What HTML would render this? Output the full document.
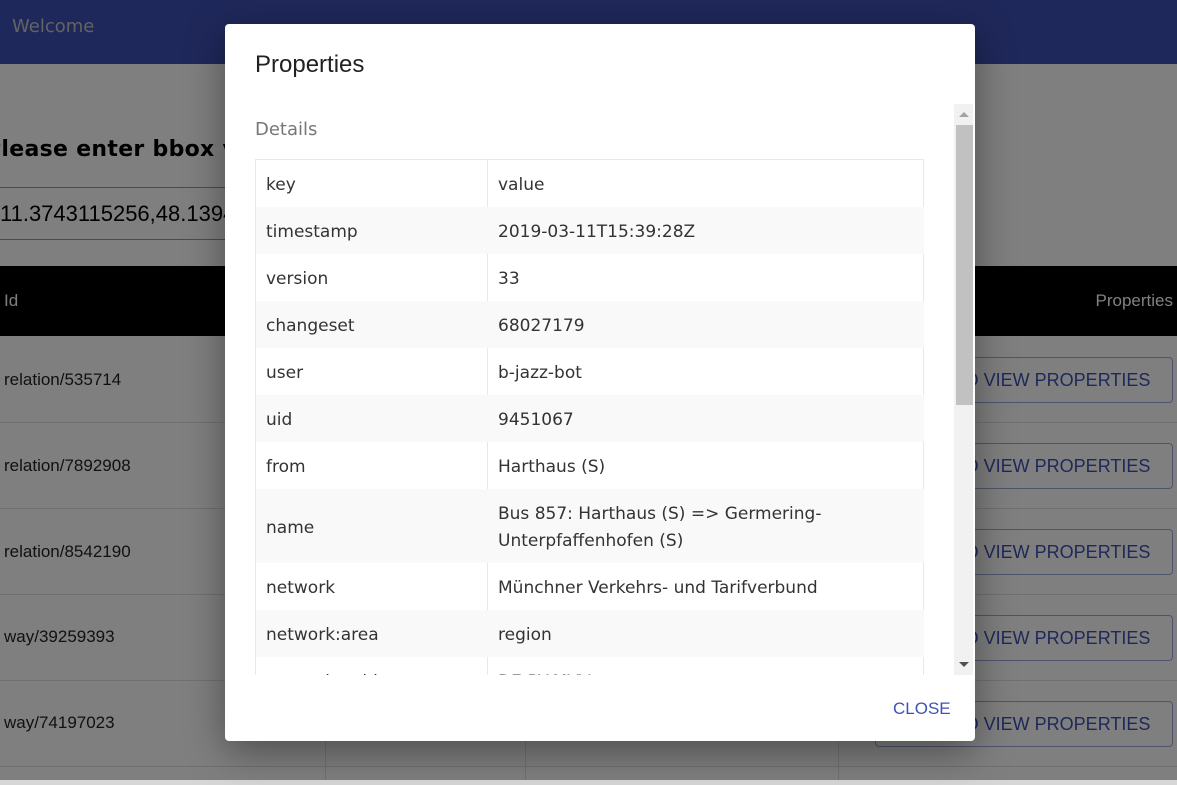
<!DOCTYPE html>
<html><head><style>
*{margin:0;padding:0;box-sizing:border-box}
body{width:1177px;height:785px;overflow:hidden;position:relative;background:#fff;font-family:"Liberation Sans",sans-serif}
.a{position:absolute}
.hdr{left:0;top:0;width:1177px;height:64px;background:#3f51b5;color:#c7c7c7}
.ov{left:0;top:0;width:1177px;height:785px;background:rgba(0,0,0,0.5)}
.row{left:0;width:1177px;border-bottom:1px solid #e0e0e0;font-size:17px;color:#222}
.btn{left:875px;width:298px;height:46px;border:1px solid rgba(63,81,181,0.5);border-radius:4px;color:#3f51b5;font-size:18px;line-height:44px;padding-left:78px}
.modal{left:225px;top:24px;width:750px;height:717px;background:#fff;border-radius:4px;box-shadow:0 10px 40px rgba(0,0,0,0.4)}
.t{font-family:"DejaVu Sans","Liberation Sans",sans-serif;font-size:17px;color:#333}
.tr{position:absolute;left:0;width:668px;height:47px}
.tr div{position:absolute;top:2px;line-height:47px}
.k{left:10px}.v{left:242px}
</style></head><body>
<div class="a hdr"><div class="a" style="left:12px;top:16px;font-size:18px;font-family:'DejaVu Sans',sans-serif">Welcome</div></div>
<div class="a" style="left:-15px;top:137px;font-size:22px;font-weight:bold;font-family:'DejaVu Sans',sans-serif;color:#000;letter-spacing:0.3px">Please enter bbox values</div>
<div class="a" style="left:0;top:187px;width:600px;height:53px;border-top:1px solid #999;border-bottom:1px solid #999;font-size:22px;line-height:52px;color:#000">11.3743115256,48.1394</div>
<div class="a" style="left:0;top:266px;width:1177px;height:70px;background:#000;color:#fff;font-size:17px"><div class="a" style="left:4px;top:25px">Id</div><div class="a" style="right:4px;top:25px">Properties</div></div>
<div class="a row" style="top:336px;height:87px"><div class="a" style="left:4px;top:34px">relation/535714</div></div>
<div class="a row" style="top:423px;height:86px"><div class="a" style="left:4px;top:33px">relation/7892908</div></div>
<div class="a row" style="top:509px;height:86px"><div class="a" style="left:4px;top:33px">relation/8542190</div></div>
<div class="a row" style="top:595px;height:86px"><div class="a" style="left:4px;top:32px">way/39259393</div></div>
<div class="a row" style="top:681px;height:86px"><div class="a" style="left:4px;top:32px">way/74197023</div></div>
<div class="a" style="left:325px;top:740px;width:1px;height:40px;background:#e0e0e0"></div>
<div class="a" style="left:525px;top:740px;width:1px;height:40px;background:#e0e0e0"></div>
<div class="a" style="left:838px;top:740px;width:1px;height:40px;background:#e0e0e0"></div>
<div class="a btn" style="top:357px">TO VIEW PROPERTIES</div>
<div class="a btn" style="top:443px">TO VIEW PROPERTIES</div>
<div class="a btn" style="top:529px">TO VIEW PROPERTIES</div>
<div class="a btn" style="top:615px">TO VIEW PROPERTIES</div>
<div class="a btn" style="top:701px">TO VIEW PROPERTIES</div>
<div class="a ov"></div>
<div class="a" style="left:0;top:780px;width:1177px;height:5px;background:#d6d6d6"></div>
<div class="a modal">
<div class="a" style="left:30px;top:27px;font-size:24px;color:#222">Properties</div>
<div class="a" style="left:0;top:80px;width:750px;height:571px;overflow:hidden">
<div class="a t" style="left:30px;top:15px;color:#777;font-size:18px">Details</div>
<div class="a" style="left:30px;top:55px;width:669px;height:600px;border:1px solid #e8e8e8">
<div class="a" style="left:231px;top:0;width:1px;height:600px;background:#e8e8e8"></div>
<div class="tr t" style="top:0"><div class="k">key</div><div class="v">value</div></div>
<div class="tr t" style="top:47px;background:#f9f9f9"><div class="k">timestamp</div><div class="v">2019-03-11T15:39:28Z</div></div>
<div class="tr t" style="top:94px"><div class="k">version</div><div class="v">33</div></div>
<div class="tr t" style="top:141px;background:#f9f9f9"><div class="k">changeset</div><div class="v">68027179</div></div>
<div class="tr t" style="top:188px"><div class="k">user</div><div class="v">b-jazz-bot</div></div>
<div class="tr t" style="top:235px;background:#f9f9f9"><div class="k">uid</div><div class="v">9451067</div></div>
<div class="tr t" style="top:282px"><div class="k">from</div><div class="v">Harthaus (S)</div></div>
<div class="tr t" style="top:329px;height:74px;background:#f9f9f9"><div class="k" style="line-height:74px">name</div><div class="v" style="line-height:27px;top:12px">Bus 857: Harthaus (S) =&gt; Germering-<br>Unterpfaffenhofen (S)</div></div>
<div class="tr t" style="top:403px"><div class="k">network</div><div class="v">Münchner Verkehrs- und Tarifverbund</div></div>
<div class="tr t" style="top:450px;background:#f9f9f9"><div class="k">network:area</div><div class="v">region</div></div>
<div class="tr t" style="top:497px"><div class="k">network:guid</div><div class="v">DE-BY-MVV</div></div>
</div>
<div class="a" style="left:729px;top:0;width:19px;height:571px;background:#f1f1f1"></div>
<div class="a" style="left:731px;top:21px;width:17px;height:280px;background:#c1c1c1"></div>
<div class="a" style="left:734px;top:8px;width:0;height:0;border-left:5px solid transparent;border-right:5px solid transparent;border-bottom:5px solid #a3a3a3"></div>
<div class="a" style="left:734px;top:558px;width:0;height:0;border-left:5px solid transparent;border-right:5px solid transparent;border-top:5px solid #505050"></div>
</div>
<div class="a" style="left:668px;top:675px;font-size:17px;color:#3f51b5">CLOSE</div>
</div>
</body></html>
